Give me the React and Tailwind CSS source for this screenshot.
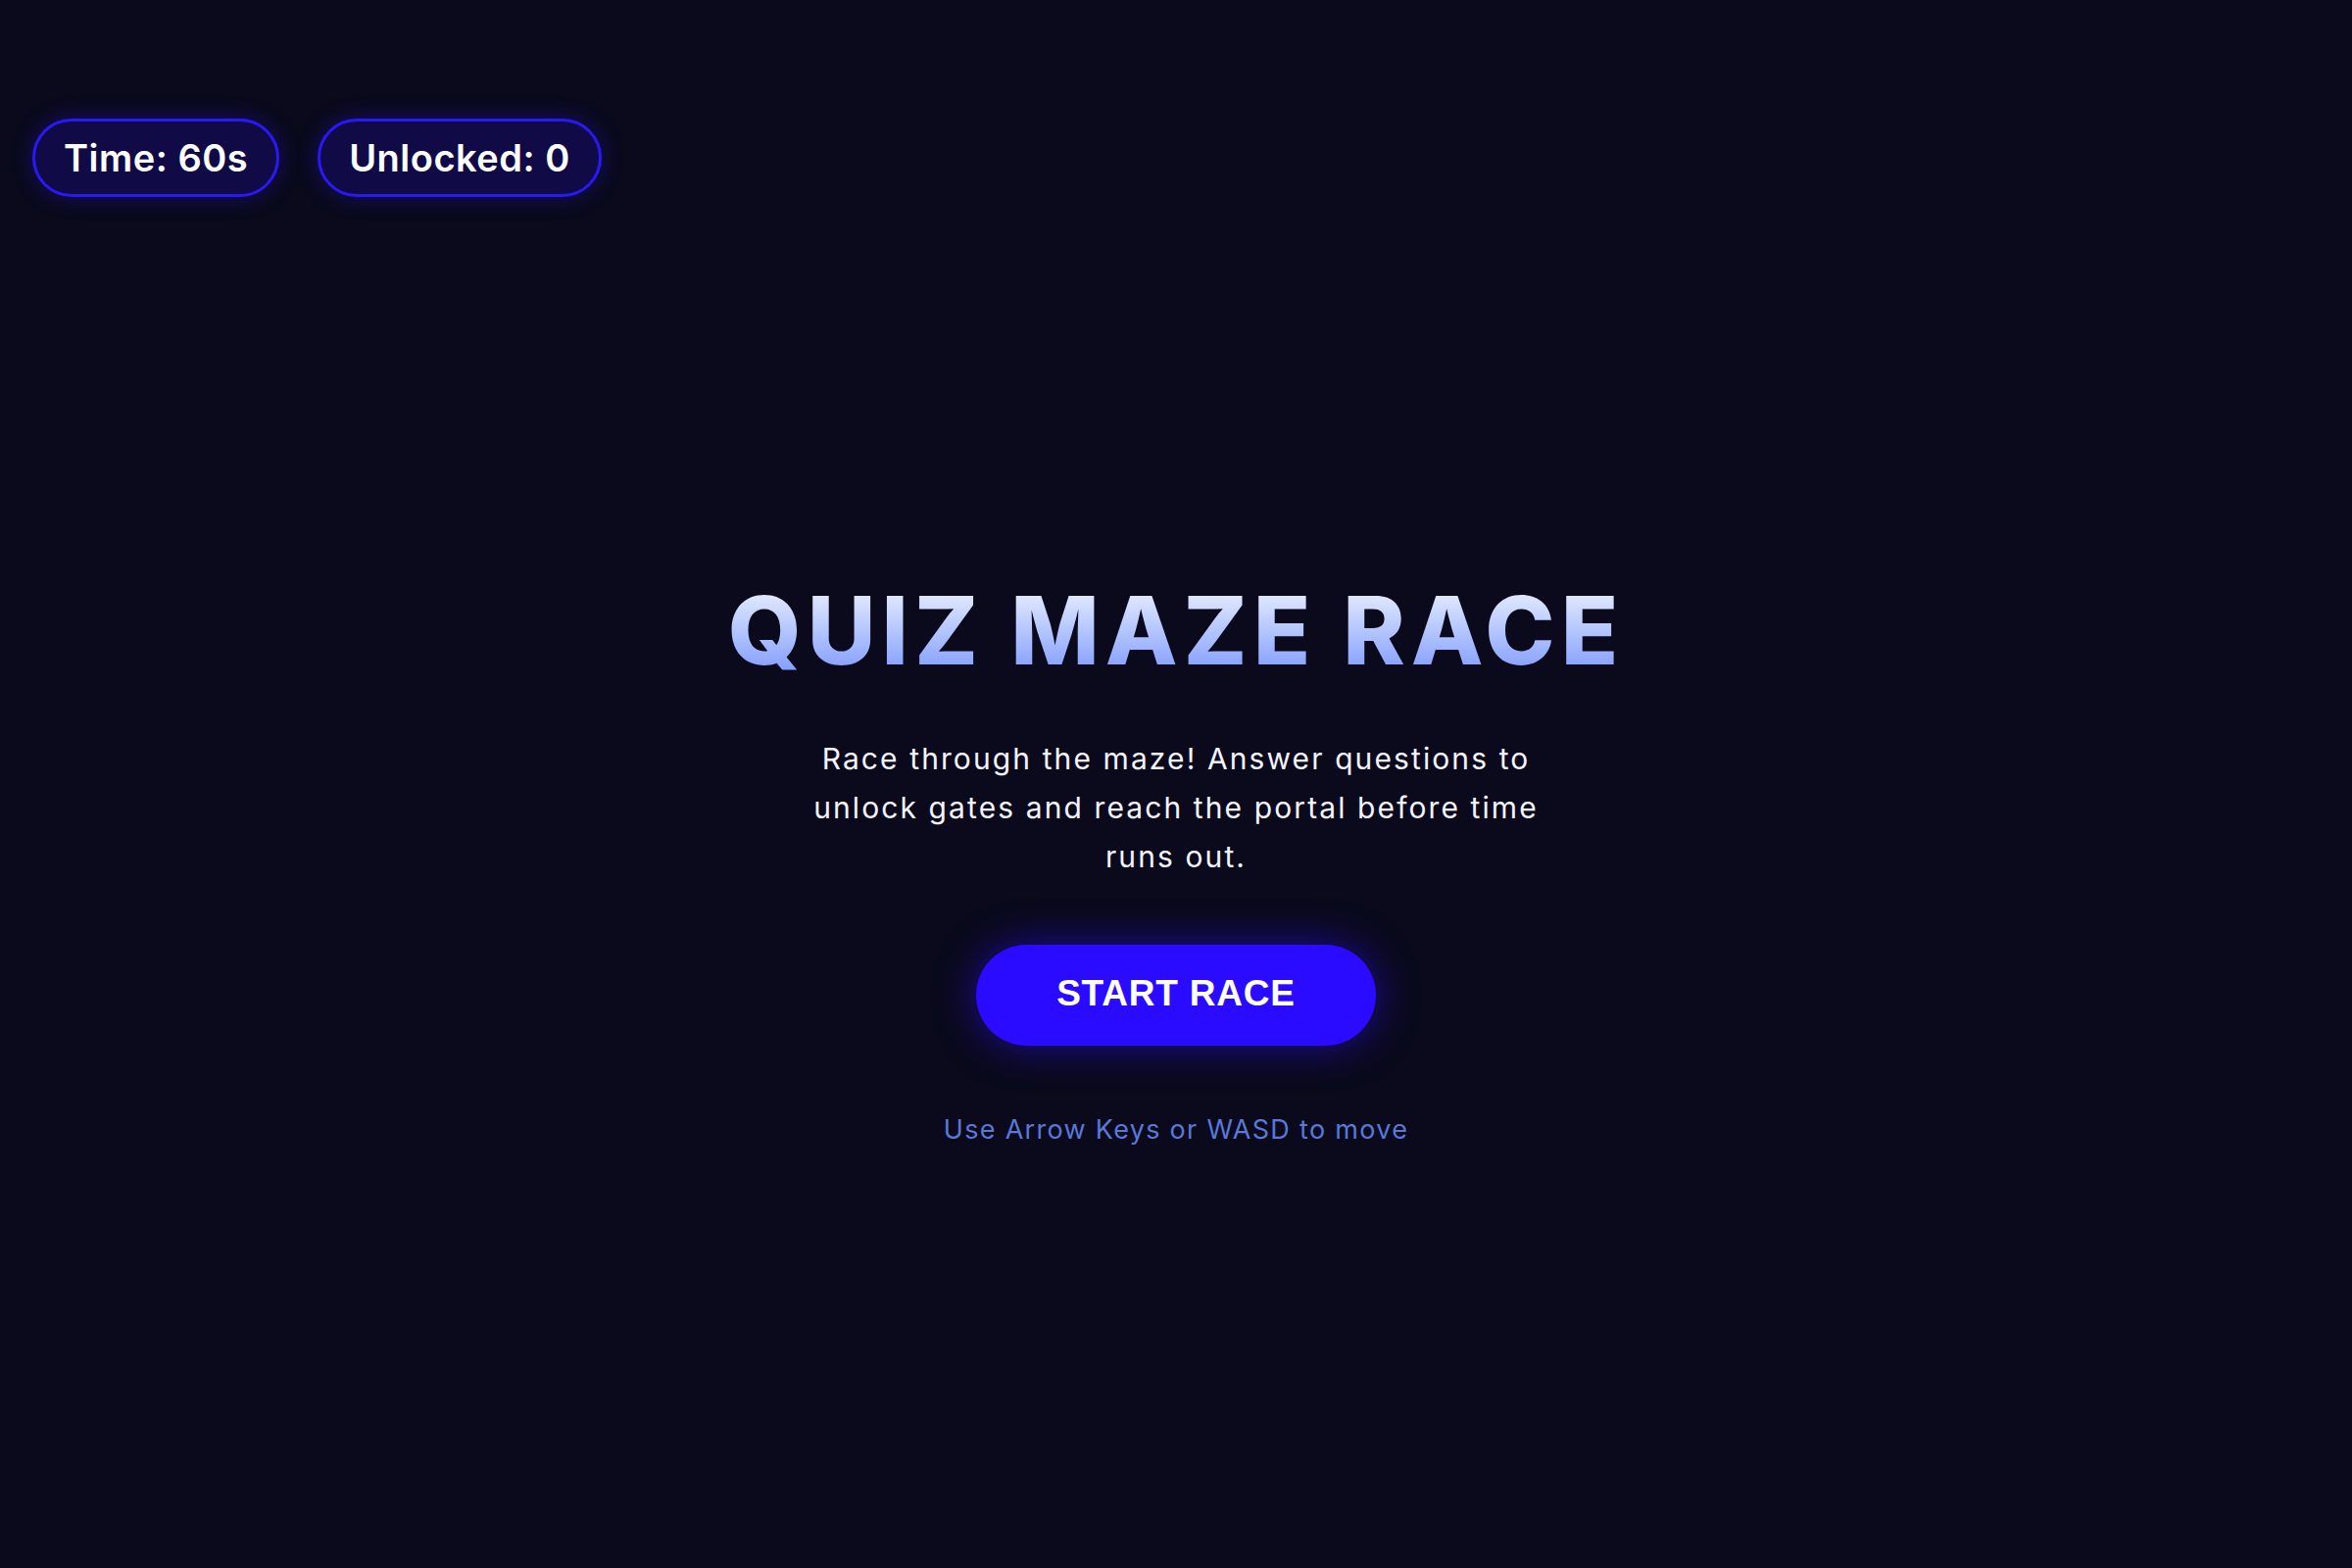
import React from "react";

const Pill = ({ label }) => (
  <div className="flex h-[80px] items-center rounded-full border-[3px] border-[#2a18f5] bg-[#100b47] px-[29px] text-[38px] font-semibold tracking-[0.5px] text-white shadow-[0_0_22px_rgba(42,24,245,0.35)]">
    {label}
  </div>
);

export default function App() {
  return (
    <div className="min-h-screen bg-[#0a0a1c] font-['Inter','Noto_Sans',sans-serif]">
      {/* HUD */}
      <div className="flex gap-[39px] pl-[33px] pt-[121px]">
        <Pill label="Time: 60s" />
        <Pill label="Unlocked: 0" />
      </div>

      {/* start screen */}
      <div className="flex flex-col items-center pt-[394px]">
        <h1 className="bg-linear-to-b from-[#eef2ff] to-[#7f98ff] bg-clip-text text-[96px] font-extrabold leading-none tracking-[6px] text-transparent">
          QUIZ MAZE RACE
        </h1>
        <p className="mt-[58px] max-w-[780px] text-center text-[30px] leading-[50px] tracking-[2.1px] text-[#f3f4ff]">
          Race through the maze! Answer questions to unlock gates and reach the portal before time runs out.
        </p>
        <button className="mt-[65px] h-[103px] rounded-full bg-[#2b0bff] pb-[3px] px-[82px] font-['Liberation_Sans','Arial',sans-serif] text-[37px] font-bold tracking-[0.8px] text-white shadow-[0_0_40px_rgba(43,11,255,0.55)]">
          START RACE
        </button>
        <p className="mt-[66px] text-[27px] leading-[40px] tracking-[1.3px] text-[#5a78d8]">
          Use Arrow Keys or WASD to move
        </p>
      </div>
    </div>
  );
}
